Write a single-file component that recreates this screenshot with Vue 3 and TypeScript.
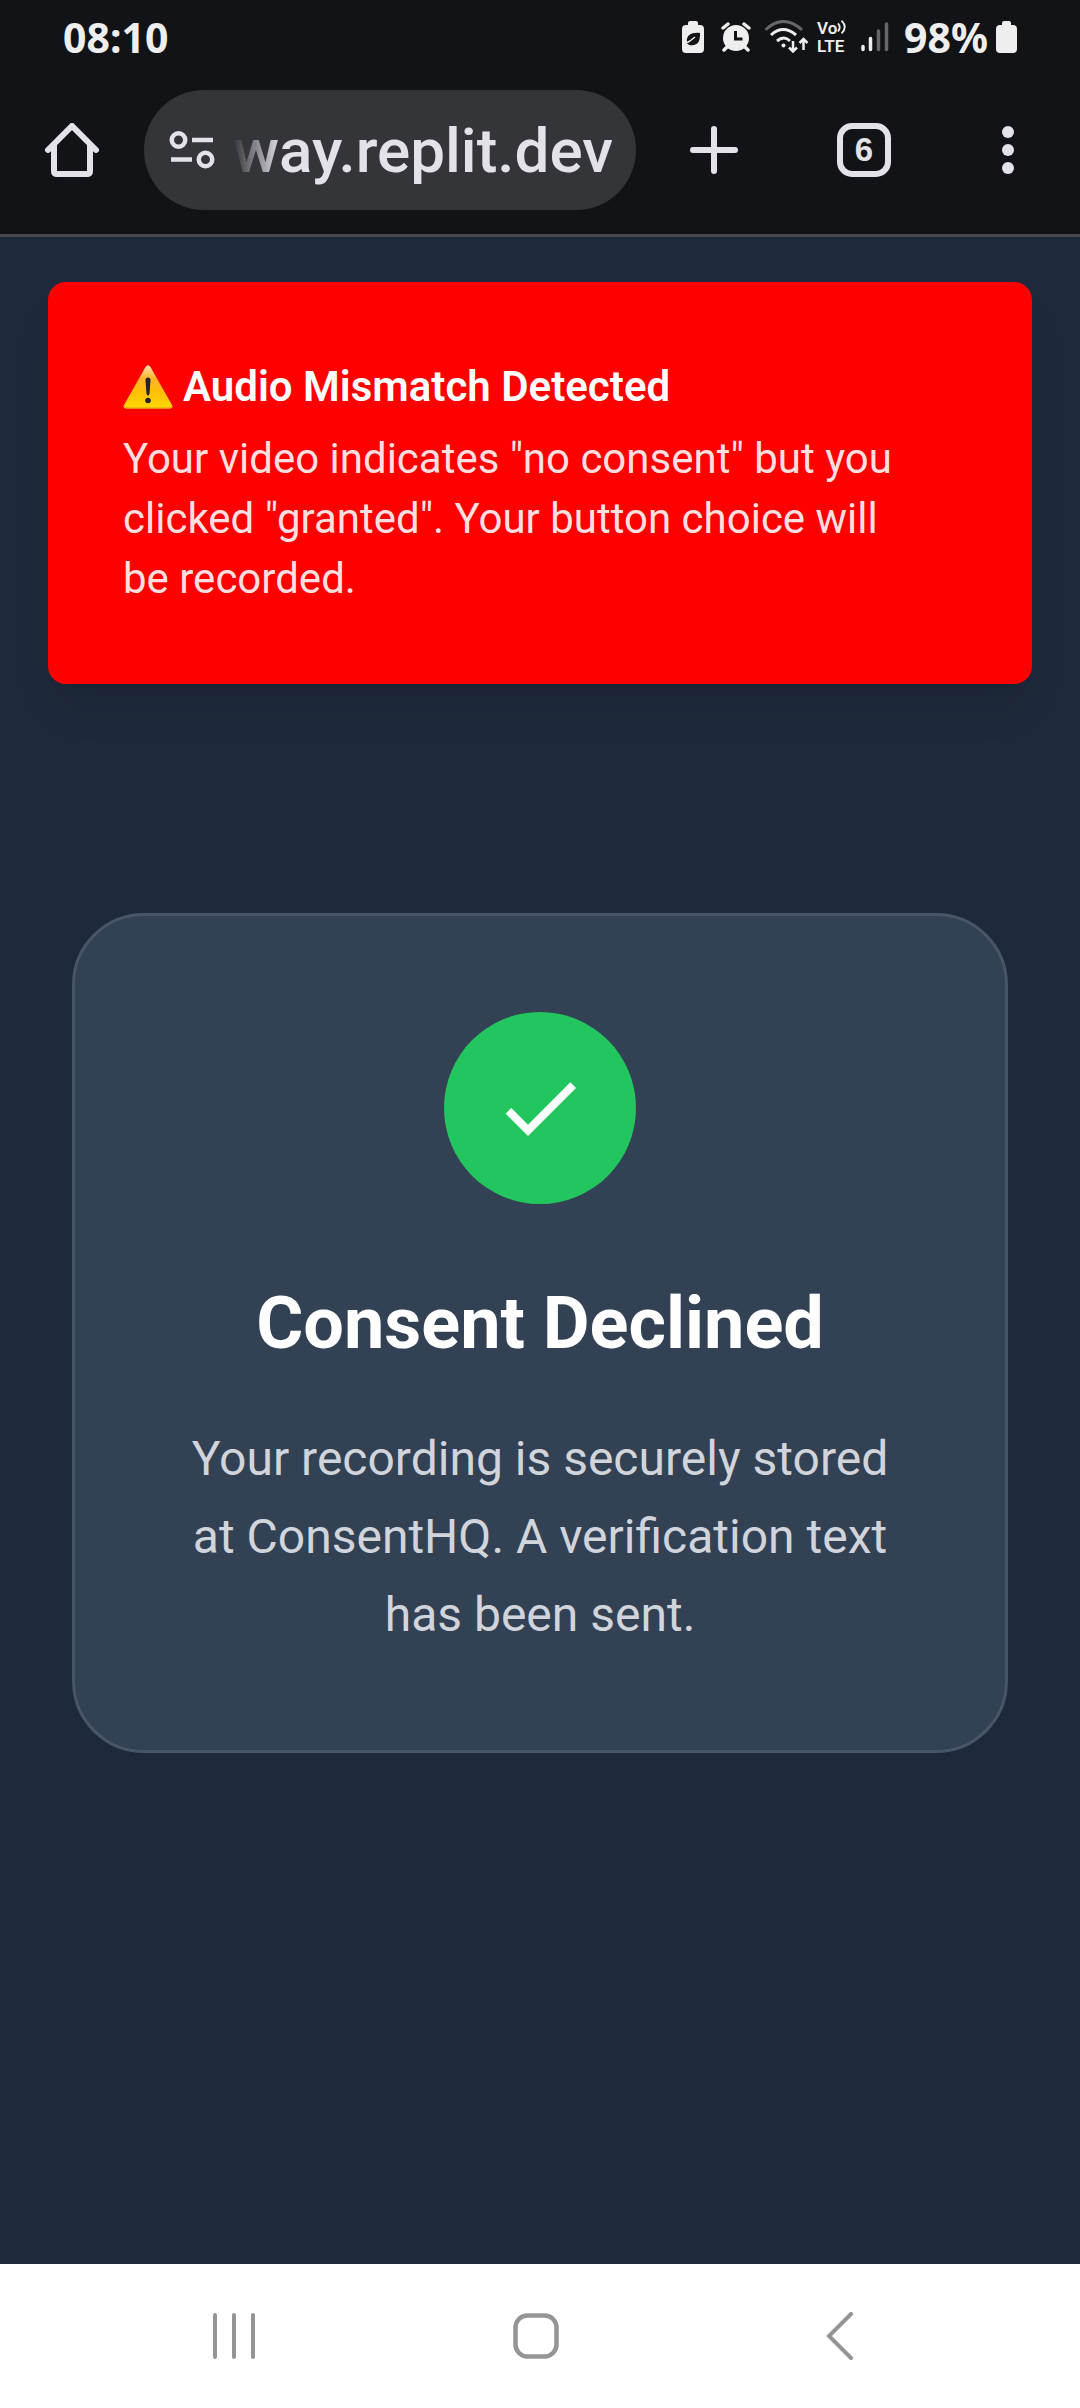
<script setup lang="ts">
import { ref } from 'vue'

const url = ref('way.replit.dev')
const openTabs = ref(6)
</script>

<template>
  <div class="screen">
    <header class="chrome">
      <div class="status">
        <time class="status-text">08:10</time>
        <div class="status-icons">
          <svg class="saver" width="22" height="32" viewBox="0 0 22 32" aria-hidden="true">
            <path d="M6 4V2q0-2 2-2h6q2 0 2 2v2h2q4 0 4 4v20q0 4-4 4H4q-4 0-4-4V8q0-4 4-4z" fill="#eee" />
            <path d="M18 12c-8-1-14 2-13 9l-2 2h3c1 2 9 2 11-3 1-3 1-5 1-8z" fill="#121316" />
            <path d="M3 23l5-3 5-4" stroke="#eee" stroke-width="1.5" fill="none" />
          </svg>
          <svg class="alarm" width="30" height="30" viewBox="0 0 30 30" aria-hidden="true">
            <circle cx="15" cy="16" r="13" fill="#eee" />
            <path d="M2 6l5-4M28 6l-5-4M6 25l-3 3M24 25l3 3" stroke="#eee" stroke-width="3.5" stroke-linecap="round" />
            <path d="M14.500 9v8h7" stroke="#121316" stroke-width="3" fill="none" />
          </svg>
          <svg class="wifi" width="44" height="34" viewBox="0 0 44 34" fill="none" stroke="#eee" stroke-width="3" aria-hidden="true">
            <path d="M1.500 9Q18-6 36 9" stroke="#66676a" stroke-linecap="round" />
            <path d="M6 15q12-11 25 0M12 21q7-6 13 0" />
            <circle cx="18.500" cy="25.500" r="2" fill="#eee" stroke="none" />
            <path d="M28 21v10M24 27.500l4 4 4-4M38.500 30V19M34.500 23l4-4 4 4" stroke-width="2.500" />
          </svg>
          <div class="volte">
            <span class="vo">Vo<svg width="10" height="16" viewBox="0 0 11 16" fill="none" stroke="#eee" stroke-width="2" aria-hidden="true"><path d="M1 4q4 4 0 9M5 1q7 7 0 14" /></svg></span>
            <span>LTE</span>
          </div>
          <svg class="signal" width="28" height="30" viewBox="0 0 28 30" stroke-width="3.500" stroke-linecap="round" aria-hidden="true">
            <path d="M2 24.500v3M9.500 16.500v11" stroke="#eee" />
            <path d="M17.500 9v18.500M25.500 2v25.500" stroke="#66676a" />
          </svg>
          <span class="status-text">98%</span>
          <svg class="battery" width="21" height="32" viewBox="0 0 21 32" aria-hidden="true">
            <path d="M6 4V2q0-2 2-2h5q2 0 2 2v2h2q4 0 4 4v20q0 4-4 4H4q-4 0-4-4V8q0-4 4-4z" fill="#eee" />
          </svg>
        </div>
      </div>

      <div class="toolbar">
        <button class="tool" type="button" aria-label="Home">
          <svg width="54" height="54" viewBox="0 0 54 54" fill="none" stroke="#e3e2e8" stroke-width="6" stroke-linecap="round" stroke-linejoin="round">
            <path d="M3 27L27 3l24 24" stroke-linejoin="miter" />
            <path d="M9 22v26q0 3 3 3h30q3 0 3-3V22" stroke-linecap="butt" />
          </svg>
        </button>
        <div class="omnibox">
          <button class="site" type="button" aria-label="Site information">
            <svg width="46" height="38" viewBox="0 0 46 38" fill="none" stroke="#e3e2e8">
              <circle cx="9.500" cy="9" r="6.750" stroke-width="4.500" />
              <circle cx="36.500" cy="28.500" r="6.750" stroke-width="4.500" />
              <path d="M23 9h21M2 28.500h21" stroke-width="4.500" />
            </svg>
          </button>
          <input v-model="url" class="url" type="text" aria-label="Address" />
        </div>
        <button class="tool add" type="button" aria-label="New tab">
          <svg width="48" height="48" viewBox="0 0 48 48" stroke="#e3e2e8" stroke-width="6" stroke-linecap="round">
            <path d="M24 3v42M3 24h42" />
          </svg>
        </button>
        <button class="tool" type="button" aria-label="Open tabs">
          <span class="count">{{ openTabs }}</span>
        </button>
        <button class="tool" type="button" aria-label="Menu">
          <svg width="12" height="48" viewBox="0 0 12 48" fill="#e3e2e8">
            <circle cx="6" cy="6" r="6" /><circle cx="6" cy="24" r="6" /><circle cx="6" cy="42" r="6" />
          </svg>
        </button>
      </div>
    </header>

    <main class="page">
      <section class="alert" role="alert">
        <h2 class="alert-title">
          <svg width="50" height="44" viewBox="0 0 50 44" aria-hidden="true">
            <defs>
              <linearGradient id="warn" x1="0" y1="0" x2="0" y2="1">
                <stop offset="0" stop-color="#ffe0b0" />
                <stop offset="0.300" stop-color="#fdb52b" />
                <stop offset="0.600" stop-color="#ffbe0a" />
                <stop offset="1" stop-color="#ffd800" />
              </linearGradient>
            </defs>
            <path d="M22.500 2q2.500-3.500 5 0l21.500 38q1.500 3.500-2 3.500H3q-3.500 0-2-3.500z" fill="url(#warn)" />
            <path d="M1 41q0 2.500 2 2.500h44q2 0 2-2.500-1 1.500-3 1.500H4q-2 0-3-1.500z" fill="#e59a1c" />
            <path d="M22.500 15q0-2.500 2.500-2.500t2.500 2.500l-1 14q-1.500 3-3 0z" fill="#26222a" />
            <circle cx="25" cy="35.500" r="2.800" fill="#26222a" />
          </svg>
          Audio Mismatch Detected
        </h2>
        <p class="alert-text">Your video indicates "no consent" but you clicked "granted". Your button choice will be recorded.</p>
      </section>

      <section class="card">
        <div class="badge">
          <svg width="96" height="96" viewBox="0 0 24 24" fill="#fff" aria-hidden="true">
            <path d="M9 16.170L4.830 12l-1.420 1.410L9 19 21 7l-1.410-1.410z" />
          </svg>
        </div>
        <h1 class="card-title">Consent Declined</h1>
        <p class="card-text">Your recording is securely stored at ConsentHQ. A verification text has been sent.</p>
      </section>
    </main>

    <nav class="system-nav" aria-label="System navigation">
      <button type="button" aria-label="Recent apps">
        <svg width="48" height="48" viewBox="0 0 48 48" stroke="#959595" stroke-width="4" stroke-linecap="round">
          <path d="M7 3v42M26 3v42M45 3v42" />
        </svg>
      </button>
      <button type="button" aria-label="Home screen">
        <svg width="48" height="48" viewBox="0 0 48 48" fill="none" stroke="#959595" stroke-width="4.500">
          <rect x="3.500" y="3.500" width="41" height="41" rx="12" />
        </svg>
      </button>
      <button type="button" aria-label="Back">
        <svg width="28" height="48" viewBox="0 0 28 48" fill="none" stroke="#959595" stroke-width="4" stroke-linecap="round">
          <path d="M25 2L3 24l22 22" />
        </svg>
      </button>
    </nav>
  </div>
</template>

<style>
body {
  margin: 0;
  background: #1e293b;
}
</style>

<style scoped>
.screen {
  display: flex;
  flex-direction: column;
  min-height: 100vh;
  font-family: Roboto, "Liberation Sans", sans-serif;
}

button {
  display: flex;
  align-items: center;
  justify-content: center;
  padding: 0;
  border: 0;
  background: none;
}

svg {
  display: block;
  flex: none;
}

.chrome {
  background: #121316;
  border-bottom: 3px solid #47494c;
}

.status {
  display: flex;
  align-items: center;
  justify-content: space-between;
  height: 74px;
  padding: 0 63px;
  color: #eee;
  font-family: "Noto Sans", sans-serif;
}

.status-text {
  font-size: 41px;
  font-weight: 700;
  line-height: 74px;
}

.status-icons {
  display: flex;
  align-items: center;
}

.alarm {
  margin-left: 17px;
}

.wifi {
  margin-left: 14px;
}

.volte {
  display: flex;
  flex-direction: column;
  width: 32px;
  margin-left: 8px;
  font-family: Roboto, sans-serif;
  font-size: 17px;
  font-weight: 600;
  line-height: 18px;
}

.vo {
  display: flex;
}

.signal {
  margin: 0 15px 0 12px;
}

.battery {
  margin-left: 8px;
}

.toolbar {
  display: flex;
  align-items: center;
  height: 152px;
  padding-bottom: 8px;
}

.tool {
  width: 144px;
  height: 144px;
}

.add {
  width: 156px;
}

.omnibox {
  display: flex;
  flex: 1;
  align-items: center;
  min-width: 0;
  height: 120px;
  padding: 0 24px;
  box-sizing: border-box;
  border-radius: 60px;
  background: #343539;
}

.site {
  width: 48px;
  height: 96px;
  margin-right: 17px;
}

.url {
  flex: 1;
  min-width: 0;
  height: 96px;
  padding: 0;
  box-sizing: border-box;
  border: 0;
  outline: 0;
  background: none;
  color: #e3e2e8;
  font-family: Roboto, sans-serif;
  font-size: 62px;
  font-weight: 500;
  text-align: right;
  mask-image: linear-gradient(to right, transparent, #000 48px);
}

.count {
  width: 54px;
  height: 54px;
  box-sizing: border-box;
  border: 6px solid #e3e2e8;
  border-radius: 15px;
  color: #e3e2e8;
  font-size: 33px;
  font-weight: 700;
  line-height: 42px;
}

.page {
  flex: 1;
  padding: 45px 48px 72px;
  background: #1e293b;
}

.alert {
  padding: 72px 120px 72px 72px;
  border: 3px solid #f00;
  border-radius: 18px;
  background: #f00;
  box-shadow: 0 30px 45px -9px rgba(0, 0, 0, 0.08), 0 12px 18px -12px rgba(0, 0, 0, 0.08);
  font-size: 42px;
  line-height: 60px;
}

.alert-title {
  display: flex;
  align-items: center;
  gap: 10px;
  margin: 0 0 12px;
  color: #fff;
  font-size: 42px;
  font-weight: 600;
}

.alert-text {
  margin: 0;
  color: #ffdfe0;
}

.card {
  margin: 229px 24px 0;
  padding: 96px;
  border: 3px solid #475569;
  border-radius: 72px;
  background: #334155;
  text-align: center;
}

.badge {
  display: flex;
  align-items: center;
  justify-content: center;
  width: 192px;
  height: 192px;
  margin: 0 auto 72px;
  border-radius: 50%;
  background: #22c55e;
}

.card-title {
  margin: 0 0 48px;
  color: #fff;
  font-size: 72px;
  font-weight: 700;
  line-height: 96px;
}

.card-text {
  margin: 0;
  color: #d1d5db;
  font-size: 48px;
  line-height: 78px;
}

.system-nav {
  display: grid;
  grid-template-columns: repeat(3, 1fr);
  height: 144px;
  padding: 0 88px 0 80px;
  background: #fff;
}
</style>
